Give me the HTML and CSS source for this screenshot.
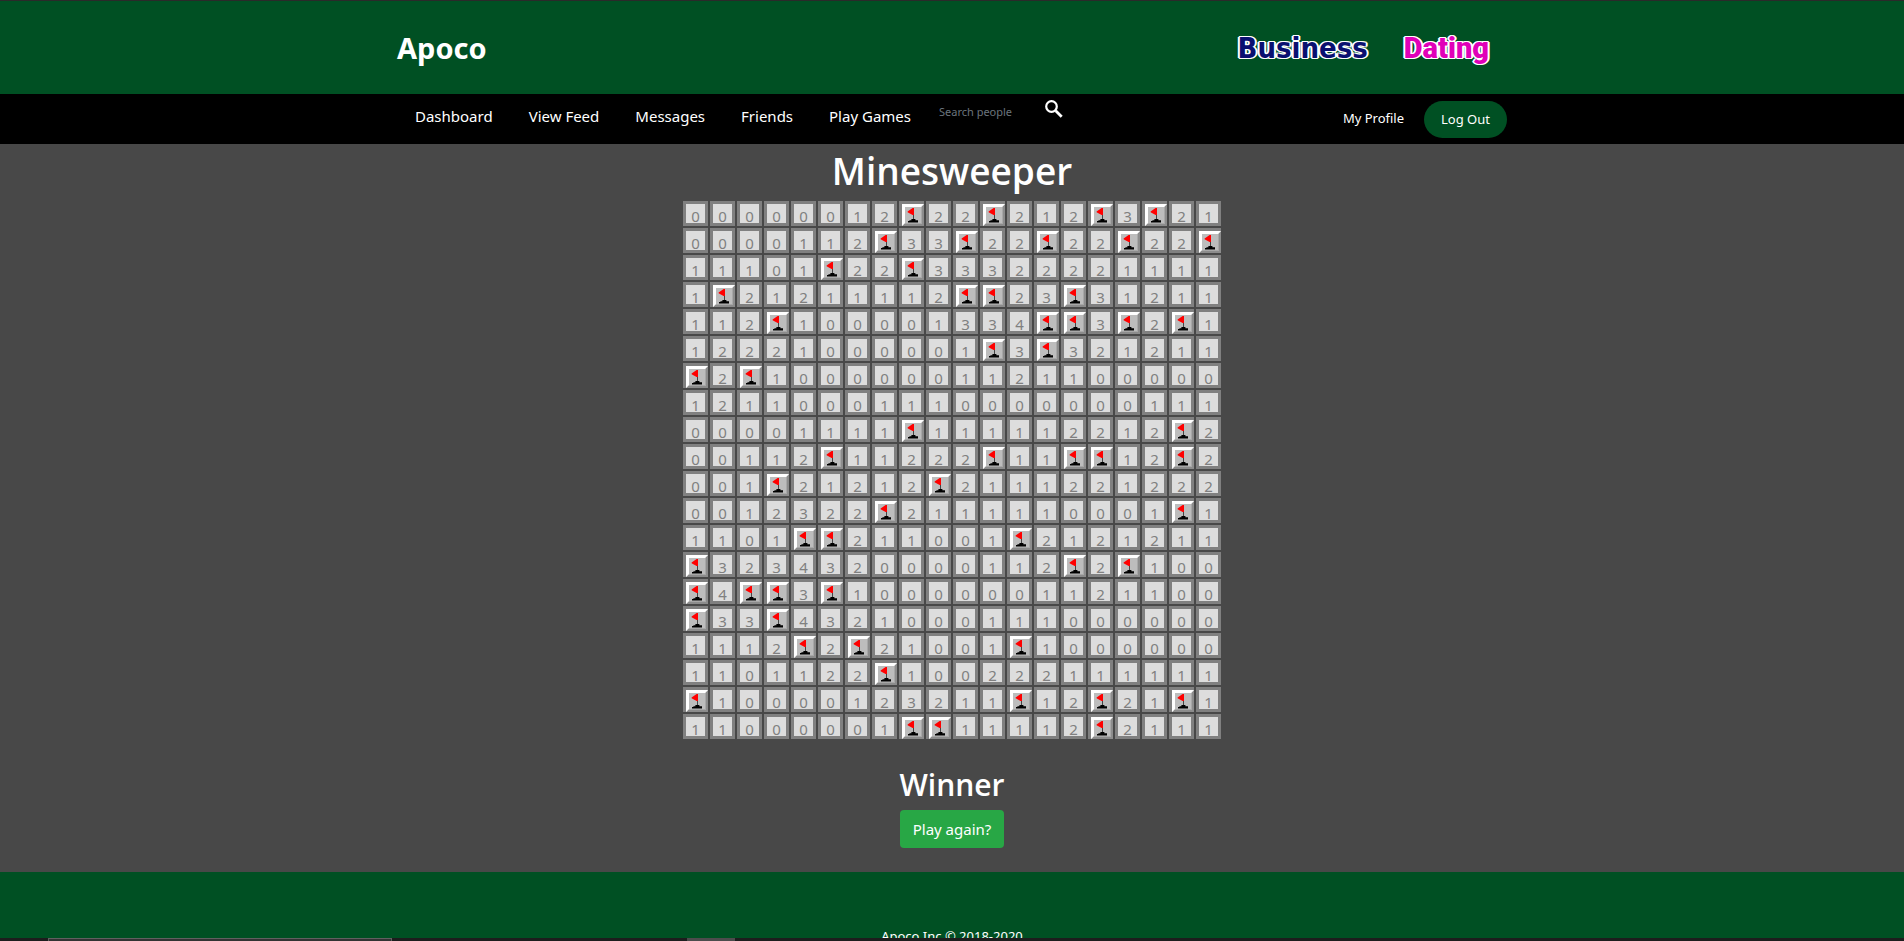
FILE: index.html
```html
<!DOCTYPE html>
<html lang="en">
<head>
<meta charset="utf-8">
<title>Apoco - Minesweeper</title>
<link rel="stylesheet" href="styles.css">
</head>
<body>
<svg class="sprite" aria-hidden="true">
  <symbol id="flag" viewBox="0 0 22 22">
    <path fill="#bdbdbd" d="M0 0h22v22H0z"/>
    <path fill="#8c8c8c" d="M22 0v22H0l2-2h18V2z"/>
    <path fill="#a8a8a8" d="M20 2v18H2l1-1h16V3z"/>
    <path fill="#fff" d="M0 0h22l-3 3H3v16l-3 3z"/>
    <path fill="#444" d="M11 10h1v6h-1z"/>
    <path fill="#f00" d="M12 4v7h-1.400L5.600 8.200V7.400L10.600 4z"/>
    <path fill="#000" d="M9.400 15h4v1.200h2.600v2.400H6v-1.600H7.400v-.8h2z"/>
  </symbol>
</svg>
<header class="header">
  <div class="container header-row">
    <a class="brand" href="#">Apoco</a>
    <div class="networks">
      <a class="business" href="#">Business</a>
      <a class="dating" href="#">Dating</a>
    </div>
  </div>
</header>
<nav class="nav">
  <div class="container nav-row">
    <a class="nav-link" href="#">Dashboard</a>
    <a class="nav-link" href="#">View Feed</a>
    <a class="nav-link" href="#">Messages</a>
    <a class="nav-link" href="#">Friends</a>
    <a class="nav-link" href="#">Play Games</a>
    <form class="search">
      <input type="text" placeholder="Search people" aria-label="Search people">
      <button type="button" aria-label="Search">
        <svg viewBox="0 0 18 18" width="18" height="18" fill="none" stroke="#fff"><circle cx="6.5" cy="6.5" r="5.3" stroke-width="2.2"/><path d="M10.7 10.7l6 6" stroke-width="2.8"/></svg>
      </button>
    </form>
    <a class="profile" href="#">My Profile</a>
    <button class="logout" type="button">Log Out</button>
  </div>
</nav>
<main class="game">
  <h1>Minesweeper</h1>
  <div class="board" id="board"></div>
  <h2>Winner</h2>
  <button class="again" type="button">Play again?</button>
</main>
<footer class="footer">Apoco Inc © 2018-2020</footer>
<div class="taskbar"><span class="task-search"></span><span class="task-app"></span></div>
<script src="board.js"></script>
</body>
</html>
```
FILE: styles.css
```css
* { box-sizing: border-box; }

body {
  margin: 0;
  height: 100vh;
  display: flex;
  flex-direction: column;
  overflow: hidden;
  border-top: 1px solid #2a2a2a;
  background: #484848;
  color: #fff;
  font: 15px/24px "Noto Sans", "Open Sans", sans-serif;
}

a { color: inherit; text-decoration: none; }
button, input { font: inherit; color: inherit; border: 0; }

.sprite { display: none; }

.container {
  width: 100%;
  max-width: 1140px;
  margin: 0 auto;
  padding: 0 15px;
  display: flex;
}

.header { flex: none; background: #005023; }
.header-row { height: 93px; align-items: center; }
.brand { font-size: 29px; line-height: 40px; font-weight: 700; }
.networks {
  margin-left: auto;
  padding-right: 18px;
  display: flex;
  align-items: center;
  gap: 36px;
}
.business, .dating {
  font-size: 29px;
  line-height: 36px;
  text-shadow: 1px 1px #fff, -1px 1px #fff, 1px -1px #fff, -1px -1px #fff, 2px 0 #fff, -2px 0 #fff;
}
.business {
  font-family: "DejaVu Sans Condensed", "DejaVu Sans", sans-serif;
  font-weight: 700;
  color: #0a1070;
}
.dating {
  font-family: Roboto, sans-serif;
  font-weight: 900;
  color: #e000b8;
}

.nav { flex: none; background: #000; }
.nav-row { height: 50px; align-items: flex-start; }
.nav-link { padding: 10px 18px; }
.search { display: flex; align-items: flex-start; padding-top: 6px; }
.search input {
  width: 104px;
  padding: 0 0 0 10px;
  background: none;
  font-size: 11px;
  line-height: 24px;
}
.search input::placeholder { color: #6c757d; opacity: 1; }
.search button { padding: 0 12px; background: none; line-height: 0; }
.profile { margin: 12px 20px 0 auto; font-size: 13px; }
.logout {
  margin-top: 7px;
  padding: 6px 17px 7px;
  border-radius: 19px;
  background: #005023;
  font-size: 13px;
}

.game { flex: none; text-align: center; padding-bottom: 24px; }
h1, h2 { margin: 0 0 5px; font-family: "Open Sans", "Noto Sans", sans-serif; font-weight: 600; }
h1 { padding-top: 2px; font-size: 37px; line-height: 50px; }
h2 { margin-top: 26px; font-size: 30px; line-height: 40px; }

.board {
  display: grid;
  grid-template-columns: repeat(20, 25px);
  grid-auto-rows: 25px;
  gap: 2px;
  justify-content: center;
}
.cell {
  padding: 0;
  border: 3px solid #808080;
  background: #ddd;
  color: #808080;
  line-height: 25px;
  display: block;
}
.cell svg { display: block; width: 22px; height: 22px; }

.again { padding: 7px 13px; border-radius: 4px; background: #28a745; }

.footer {
  flex: 1;
  min-height: 0;
  overflow: hidden;
  padding-top: 54px;
  background: #005023;
  font-size: 13px;
  line-height: 20px;
  text-align: center;
}

.taskbar { flex: none; height: 3px; display: flex; background: #1d1d1d; padding-left: 48px; }
.task-search { width: 344px; border: 1px solid #606060; border-bottom: 0; background: #333; }
.task-app { width: 48px; margin-left: 295px; background: #4c4c4c; }
```
FILE: board.js
```js
const rows = [
  "00000012F22F212F3F21",
  "0000112F33F22F22F22F",
  "11101F22F33322221111",
  "1F21211112FF23F31211",
  "112F100001334FF3F2F1",
  "12221000001F3F321211",
  "F2F10000001121100000",
  "12110001110000000111",
  "00001111F111112212F2",
  "00112F11222F11FF12F2",
  "001F21212F2111221222",
  "0012322F2111110001F1",
  "1101FF211001F2121211",
  "F3234320000112F2F100",
  "F4FF3F10000001121100",
  "F33F4321000111000000",
  "1112F2F21001F1000000",
  "1101122F100222111111",
  "F10000123211F12F21F1",
  "11000001FF11112F2111"
];
const board = document.getElementById("board");
for (const value of rows.join("")) {
  const cell = document.createElement("button");
  cell.type = "button";
  cell.className = "cell";
  if (value === "F") {
    cell.setAttribute("aria-label", "Flag");
    cell.innerHTML = '<svg><use href="#flag"/></svg>';
  } else {
    cell.textContent = value;
  }
  board.append(cell);
}
```
